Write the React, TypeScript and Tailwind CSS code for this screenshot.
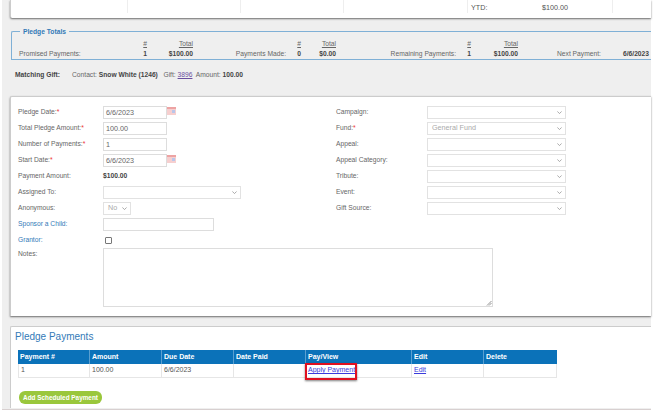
const F = "text-[6.7px]";

function Cal() {
  return (
    <svg width="9" height="8" viewBox="0 0 9 8" className="mt-[-3px] shrink-0">
      <rect width="9" height="8" fill="#f6cfcf" />
      <rect y="0" width="9" height="2" fill="#eda3a3" />
      <rect x="5" y="3" width="3" height="3" fill="#b9c6ea" />
    </svg>
  );
}

function Chevron() {
  return (
    <svg width="5" height="3" viewBox="0 0 5 3" className="shrink-0">
      <path d="M0.4 0.5 L2.5 2.5 L4.6 0.5" fill="none" stroke="#888" strokeWidth="0.7" />
    </svg>
  );
}

function Input({ value, w = "w-[64px]" }: { value?: string; w?: string }) {
  return (
    <div className={`${w} h-[13px] border border-[#ddd] bg-white pl-[2px] text-[7.2px] leading-[11px] text-[#666]`}>
      {value}
    </div>
  );
}

function Select({ value, w, disabled }: { value?: string; w: string; disabled?: boolean }) {
  return (
    <div className={`${w} h-[13px] border border-[#e2e2e2] bg-white flex items-center justify-between pl-[4px] pr-[3px] text-[7.2px] ${disabled ? "text-[#aaa]" : "text-[#666]"}`}>
      <span>{value}</span>
      <Chevron />
    </div>
  );
}

function Row({ label, req, blue, children }: { label: string; req?: boolean; blue?: boolean; children?: React.ReactNode }) {
  return (
    <div className="h-[16px] flex items-center">
      <div className={`w-[85px] ${F} ${blue ? "text-[#337ab7]" : "text-[#666]"}`}>
        {label}
        {req && <span className="text-[#e33]">*</span>}
      </div>
      {children}
    </div>
  );
}

function RightRow({ label, req, value, disabled }: { label: string; req?: boolean; value?: string; disabled?: boolean }) {
  return (
    <div className="h-[16px] flex items-center">
      <div className={`w-[91px] ${F} text-[#666]`}>
        {label}
        {req && <span className="text-[#e33]">*</span>}
      </div>
      <Select w="w-[139px]" value={value} disabled={disabled} />
    </div>
  );
}

function Stat({ label, labelW, n, nW, total, totalW, left }: { label: string; labelW: string; n: string; nW: string; total: string; totalW: string; left?: boolean }) {
  return (
    <div className={`flex items-end ${F} leading-[10px] shrink-0 whitespace-nowrap`}>
      <div className={`${labelW} text-[#666] ${left ? "text-left" : "text-right"}`}>{label}</div>
      <div className={`${nW} text-right`}>
        <div className="underline text-[#666]">#</div>
        <div className="font-bold text-[#444]">{n}</div>
      </div>
      <div className={`${totalW} text-right`}>
        <div className="underline text-[#666]">Total</div>
        <div className="font-bold text-[#444]">{total}</div>
      </div>
    </div>
  );
}

const cols = ["w-[72px]", "w-[72px]", "w-[72px]", "w-[72px]", "w-[106px]", "w-[72px]", "w-[73px]"];

export default function App() {
  return (
    <div className="w-[661px] h-[419px] overflow-hidden bg-white font-['Liberation_Sans',Arial,sans-serif]">
      <div className="ml-[2px] w-[649px] h-[410px] bg-[#efefef] border-b border-[#d8d0d0]">
        {/* top card */}
        <div className="ml-[8px] h-[18px] bg-white border-l border-[#ccc] rounded-bl-[2px] shadow-[0_1px_2px_rgba(0,0,0,0.55)] flex text-[7.2px] text-[#555]">
          <div className="w-[117px] border-r border-[#eee] h-[13px]" />
          <div className="w-[113px] border-r border-[#eee] h-[13px]" />
          <div className="w-[103px] border-r border-[#eee] h-[13px]" />
          <div className="w-[124px] border-r border-[#eee] h-[13px]" />
          <div className="w-[145px] border-r border-[#eee] h-[13px] flex items-end pl-[3px] leading-[11px]">
            <span className="w-[71px]">YTD:</span>
            <span>$100.00</span>
          </div>
        </div>

        {/* fieldset */}
        <fieldset className="ml-[9px] mt-[9px] h-[33px] border-y border-l border-[#7fb0d6] rounded-tl-[2px] pl-[7px] flex">
          <legend className="ml-[1px] px-[3px] text-[6.7px] font-bold text-[#337ab7] leading-[9px]">Pledge Totals</legend>
          <div className="flex items-end w-full mt-auto">
            <Stat left label="Promised Payments:" labelW="w-[62px]" n="1" nW="w-[66px]" total="$100.00" totalW="w-[46px]" />
            <Stat label="Payments Made:" labelW="w-[93px]" n="0" nW="w-[15px]" total="$0.00" totalW="w-[35px]" />
            <Stat label="Remaining Payments:" labelW="w-[120px]" n="1" nW="w-[15px]" total="$100.00" totalW="w-[47px]" />
            <div className={`flex ${F} leading-[10px] shrink-0 whitespace-nowrap`}>
              <span className="ml-[39px] w-[66px] text-[#666]">Next Payment:</span>
              <span className="font-bold text-[#444]">6/6/2023</span>
            </div>
          </div>
        </fieldset>

        {/* matching gift */}
        <div className={`ml-[13px] mt-[10px] h-[10px] flex items-center ${F} text-[#666] whitespace-pre`}>
          <span className="w-[57px] font-bold text-[#444]">Matching Gift:</span>
          <span>Contact: </span>
          <span className="font-bold text-[#444]">Snow White (1246)</span>
          <span>   Gift: </span>
          <span className="underline text-[#6b4fa0]">3896</span>
          <span>  Amount: </span>
          <span className="font-bold text-[#444]">100.00</span>
        </div>

        {/* form card */}
        <div className="ml-[8px] mt-[16px] h-[220px] bg-white border-t border-l border-[#ccc] rounded-tl-[2px] shadow-[0_1px_2px_rgba(0,0,0,0.55)] pl-[7px] pt-[7px]">
          <div className="flex">
            <div className="w-[318px]">
              <Row label="Pledge Date:" req><Input value="6/6/2023" /><Cal /></Row>
              <Row label="Total Pledge Amount:" req><Input value="100.00" /></Row>
              <Row label="Number of Payments:" req><Input value="1" /></Row>
              <Row label="Start Date:" req><Input value="6/6/2023" /><Cal /></Row>
              <Row label="Payment Amount:"><span className={`${F} font-bold text-[#444]`}>$100.00</span></Row>
              <Row label="Assigned To:"><Select w="w-[138px]" /></Row>
              <Row label="Anonymous:"><Select w="w-[28px]" value="No" disabled /></Row>
              <Row label="Sponsor a Child:" blue><Input w="w-[111px]" /></Row>
              <Row label="Grantor:" blue>
                <div className="ml-[2px] w-[7px] h-[7px] border border-[#777] rounded-[1px] bg-white" />
              </Row>
            </div>
            <div>
              <RightRow label="Campaign:" />
              <RightRow label="Fund:" req value="General Fund" disabled />
              <RightRow label="Appeal:" />
              <RightRow label="Appeal Category:" />
              <RightRow label="Tribute:" />
              <RightRow label="Event:" />
              <RightRow label="Gift Source:" />
            </div>
          </div>
          <div className="flex">
            <div className={`w-[85px] ${F} text-[#666] leading-[10px] mt-[1px]`}>Notes:</div>
            <div className="relative w-[390px] h-[59px] border border-[#ddd] bg-white">
              <svg width="6" height="6" viewBox="0 0 6 6" className="absolute right-0 bottom-0">
                <path d="M1 5.5 L5.5 1 M3 5.5 L5.5 3" stroke="#666" strokeWidth="0.7" />
              </svg>
            </div>
          </div>
        </div>

        {/* payments card */}
        <div className="ml-[8px] mt-[10px] h-[82px] bg-white border-t border-l border-[#ccc] rounded-tl-[2px] pl-[4px] pt-[2px]">
          <h2 className="text-[10px] leading-[16px] text-[#337ab7] font-normal">Pledge Payments</h2>
          <div className="ml-[3px] mt-[5px] w-[539px] text-[7px]">
            <div className="flex h-[14px] bg-[#0b72b9] text-white font-bold items-center">
              {["Payment #", "Amount", "Due Date", "Date Paid", "Pay/View", "Edit", "Delete"].map((h, i) => (
                <div key={h} className={`${cols[i]} h-full flex items-center pl-[2px] border-r border-[#5a9fd0] last:border-r-0`}>{h}</div>
              ))}
            </div>
            <div className="flex h-[14px] border-b border-[#e6e6e6] text-[#555] items-center">
              <div className={`${cols[0]} h-full flex items-center pl-[2px] border-x border-[#e6e6e6]`}>1</div>
              <div className={`${cols[1]} h-full flex items-center pl-[2px] border-r border-[#e6e6e6]`}>100.00</div>
              <div className={`${cols[2]} h-full flex items-center pl-[2px] border-r border-[#e6e6e6]`}>6/6/2023</div>
              <div className={`${cols[3]} h-full border-r border-[#e6e6e6]`} />
              <div className={`${cols[4]} h-full flex items-center pl-[2px] border-r border-[#e6e6e6] relative`}>
                <a className="underline text-[#3b3bdc]">Apply Payment</a>
                <div className="absolute left-[-1px] top-[-1px] w-[52px] h-[17px] border-2 border-[#e01020] shadow-[0_1px_2px_rgba(0,0,0,0.5)]" />
              </div>
              <div className={`${cols[5]} h-full flex items-center pl-[2px] border-r border-[#e6e6e6]`}>
                <a className="underline text-[#3b3bdc]">Edit</a>
              </div>
              <div className={`${cols[6]} h-full border-r border-[#e6e6e6]`} />
            </div>
          </div>
          <button className="ml-[4px] mt-[13px] w-[83px] h-[13px] rounded-[6px] bg-[#9ac73c] text-white font-bold text-[6.4px] whitespace-nowrap block">
            Add Scheduled Payment
          </button>
        </div>
      </div>
    </div>
  );
}
